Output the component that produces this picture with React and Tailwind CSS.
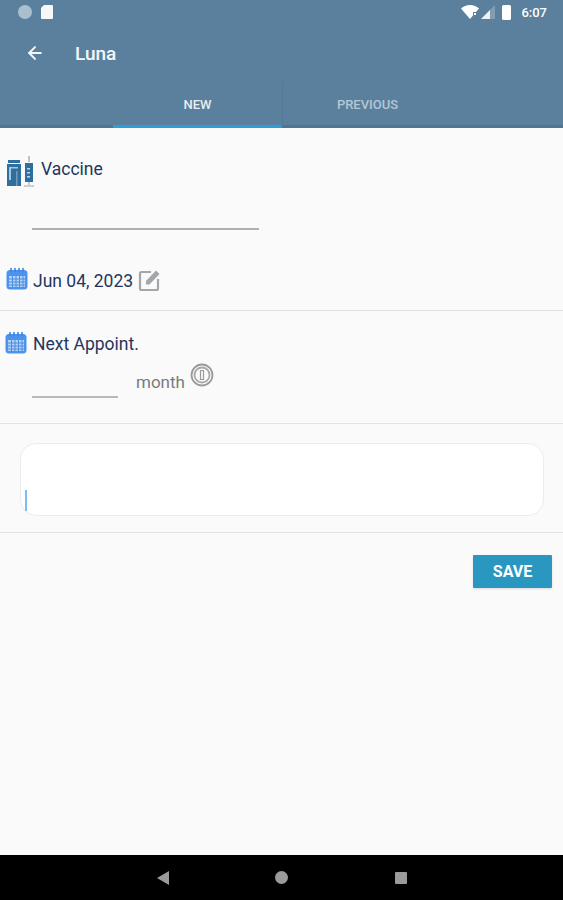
import React from "react";
import { ArrowLeft } from "lucide-react";

const FONT = { fontFamily: "Roboto, sans-serif" };

function CalendarIcon() {
  return (
    <svg width="22" height="23" viewBox="0 0 22 23" className="shrink-0 -translate-y-[2px]">
      <rect x="0.500" y="3" width="21" height="19.500" rx="3.500" fill="#4a94ee" />
      <rect x="3" y="9" width="16" height="11" fill="#b4d4f7" />
      <path d="M5 1.500v3M9 1.500v3M13 1.500v3M17 1.500v3" stroke="#3a84e2" strokeWidth="1.600" strokeLinecap="round" />
      <path d="M3 12h16M3 15h16M3 18h16M6.500 9v11M10 9v11M13.500 9v11M17 9v11" stroke="#4a8ce0" strokeWidth="1" />
    </svg>
  );
}

function VaccineIcon() {
  return (
    <svg width="27" height="31" viewBox="0 0 27 31" className="shrink-0 ml-px">
      <rect x="1" y="4" width="12" height="3" fill="#2f6f9f" />
      <path d="M0 8h14v22H0z" fill="#2f6f9f" />
      <path d="M2 11h9v1.500H4V24H2z" fill="#a9c6da" />
      <path d="M9 15h1.500v15H9z" fill="#6f9cbc" />
      <path d="M22 0v6" stroke="#b9c4cc" strokeWidth="2" />
      <path d="M18 7h8v19h-8z" fill="#2f6f9f" />
      <path d="M20 12h3v1.500h-3zM20 16h3v1.500h-3zM20 20h3v1.500h-3z" fill="#c4d8e6" />
      <path d="M22 26v3M17 30h10" stroke="#b9c4cc" strokeWidth="1.600" />
    </svg>
  );
}

function EditIcon() {
  return (
    <svg width="24" height="24" viewBox="0 0 24 24" className="shrink-0 -translate-y-[1px]">
      <path d="M13 4H3.500A1.500 1.500 0 0 0 2 5.500v15A1.500 1.500 0 0 0 3.500 22h15a1.500 1.500 0 0 0 1.500-1.500V11" fill="none" stroke="#a3a7ab" strokeWidth="2.200" />
      <path d="M8 13l10-10.500 3.500 3.500-10 10.500H8z" fill="#a3a7ab" />
    </svg>
  );
}

function InfoIcon() {
  return (
    <svg width="24" height="24" viewBox="0 0 24 24" className="shrink-0">
      <circle cx="12" cy="12" r="10.500" fill="none" stroke="#9a9a9a" strokeWidth="1.800" />
      <circle cx="12" cy="12" r="7.500" fill="none" stroke="#a8a8a8" strokeWidth="1.800" />
      <path d="M10.500 7.500h3v9h-3z" fill="#fafafa" stroke="#9a9a9a" strokeWidth="1.200" />
    </svg>
  );
}

function StatusBar() {
  return (
    <div className="h-6 flex items-center justify-between pl-[18px] pr-[16px]">
      <div className="flex items-center gap-[9px]">
        <span className="w-[14px] h-[14px] rounded-full bg-[#a9bfcd]" />
        <svg width="12" height="14" viewBox="0 0 12 14">
          <path d="M3 0h8a1 1 0 0 1 1 1v12a1 1 0 0 1-1 1H1a1 1 0 0 1-1-1V3z" fill="#f5f7f9" />
        </svg>
      </div>
      <div className="flex items-center text-white">
        <svg width="18" height="14" viewBox="0 0 18 14" className="mr-[2px]">
          <path d="M0 3.500C2.500 1.200 5.500 0 9 0s6.500 1.200 9 3.500L9 14z" fill="#fff" />
          <path d="M12 7h4v4h-4z" fill="#5a809e" />
          <path d="M13 8h2v2h-2z" fill="#fff" />
        </svg>
        <svg width="14" height="14" viewBox="0 0 14 14" className="mr-[7px]">
          <path d="M14 0v14H0z" fill="#7f9db4" />
          <path d="M9 5v9H0z" fill="#eef2f5" />
        </svg>
        <span className="w-[9px] h-[15px] rounded-[1.500px] bg-white mr-[10px]" />
        <span className="text-[13px] font-medium leading-none">6:07</span>
      </div>
    </div>
  );
}

function Header() {
  return (
    <div className="bg-[#5a809e]">
      <StatusBar />
      <div className="h-[58px] flex items-center">
        <ArrowLeft size={20} strokeWidth={2.400} className="ml-[25px] text-[#f4f7f9]" />
        <span className="ml-[30px] pt-[2px] text-[19px] font-medium text-[#f4f7f9]">Luna</span>
      </div>
      <div className="flex h-[46px] pl-[113px] border-b-[3px] border-[#4f7590]">
        <div className="w-[169px] h-[46px] shrink-0 flex items-center justify-center pt-[3px] border-b-[3px] border-[#2a9fdc] text-[13px] font-medium text-[#e8eef2]">
          NEW
        </div>
        <div className="w-[170px] h-[43px] flex items-center justify-center pt-[3px] text-[13px] font-medium text-[#b5c7d4] border-l border-[#547a96]">
          PREVIOUS
        </div>
      </div>
    </div>
  );
}

function Divider() {
  return <div className="h-px bg-[#e3e3e3]" />;
}

export default function App() {
  return (
    <div className="w-[563px] h-[900px] flex flex-col bg-[#fafafa] overflow-hidden" style={FONT}>
      <Header />
      <div className="flex-1 min-h-0 flex flex-col">
        <div className="h-[182px] px-[6px] pt-[28px] flex flex-col">
          <div className="flex items-start gap-[7px] h-[31px]">
            <VaccineIcon />
            <span className="text-[17.500px] leading-[26px] text-[#24365e]">Vaccine</span>
          </div>
          <div className="mt-[41px] ml-[26px] w-[227px] h-[1.500px] bg-[#b0b0b0]" />
          <div className="mt-[38px] flex items-center gap-[5px]">
            <CalendarIcon />
            <span className="text-[17.500px] text-[#24365e]">Jun 04, 2023</span>
            <EditIcon />
          </div>
        </div>
        <Divider />
        <div className="h-[112px] px-[5px] pt-[20px]">
          <div className="flex items-center gap-[6px]">
            <CalendarIcon />
            <span className="text-[17.500px] text-[#24365e]">Next Appoint.</span>
          </div>
          <div className="flex items-start ml-[27px] mt-[7px]">
            <div className="w-[86px] h-[34px] border-b-2 border-[#b8b8b8]" />
            <span className="ml-[18px] text-[17px] leading-none mt-[10px] text-[#7a7a7a]">month</span>
            <div className="ml-[5px] -mt-[1px]">
              <InfoIcon />
            </div>
          </div>
        </div>
        <Divider />
        <div className="h-[108px] pl-[20px] pr-[19px] pt-[19px]">
          <div className="h-[73px] bg-white rounded-[16px] border border-[#ececec] flex items-end pl-[4px] pb-[4px]">
            <span className="w-[2px] h-[21px] bg-[#7cbcf0]" />
          </div>
        </div>
        <Divider />
        <div className="flex justify-end pt-[22px] pr-[11px]">
          <button type="button" className="w-[79px] h-[33px] bg-[#2a97c0] rounded-[1px] text-[16px] font-bold text-white shadow-sm">
            SAVE
          </button>
        </div>
      </div>
      <div className="h-[45px] bg-black flex items-center relative shrink-0">
        <svg width="12" height="14" viewBox="0 0 12 14" className="ml-[157px] text-[#9a9a9a]">
          <path d="M12 0v14L0 7z" fill="currentColor" />
        </svg>
        <span className="ml-[106px] w-[13px] h-[13px] rounded-full bg-[#9a9a9a]" />
        <span className="ml-[107px] w-[12px] h-[12px] rounded-[1px] bg-[#9a9a9a]" />
      </div>
    </div>
  );
}
